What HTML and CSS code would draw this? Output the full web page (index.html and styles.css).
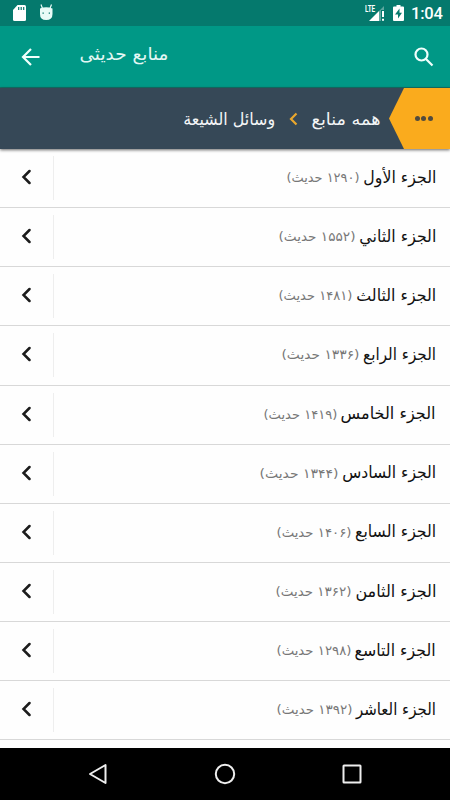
FILE: index.html
```html
<!DOCTYPE html>
<html lang="fa" dir="rtl">
<head>
<meta charset="utf-8">
<title>منابع حدیثی</title>
<link rel="stylesheet" href="styles.css">
</head>
<body>
<div class="status" dir="ltr">
  <svg class="status-left" width="60" height="26" viewBox="0 0 60 26">
    <path fill="#fff" d="M17.500 5H24.500Q26 5 26 6.500V19.500Q26 21 24.500 21H14.500Q13 21 13 19.500V10Z"/>
    <path stroke="#087a6e" stroke-width="1.200" d="M18.700 7v3M21.200 7v3M23.700 7v3"/>
    <path fill="#e9fbf7" d="M40 8.500Q46 6 52.500 8.500V14Q52.500 20 46.200 20T40 14Z"/>
    <path stroke="#e9fbf7" stroke-width="1.200" d="M41 4.500l1.500 4M51.500 4.500l-1.500 4"/>
    <path fill="#087a6e" d="M42.500 12.500h1.300v1.300h-1.300zM48.700 12.500H50v1.300h-1.300z"/>
  </svg>
  <div class="status-right">
    <span class="lte">LTE</span>
    <svg width="18" height="26" viewBox="0 0 18 26">
      <path fill="#fff" d="M1 21L11 11V21Z"/>
      <path fill="#5da79f" d="M11 11L16 6V10H13V21H11Z"/>
      <path fill="#fff" d="M14 11h2v6h-2zM14 18.700h2v2h-2z"/>
    </svg>
    <svg class="battery" width="12" height="26" viewBox="0 0 12 26">
      <path fill="#fff" d="M3.500 5H7.500V6.500H10Q11 6.500 11 7.500V20Q11 21 10 21H1Q0 21 0 20V7.500Q0 6.500 1 6.500H3.500Z"/>
      <path fill="#087a6e" d="M6.500 8.500L2 14.500H5V18.500L9 12.700H6.500Z"/>
    </svg>
    <span class="clock">1:04</span>
  </div>
</div>
<header class="toolbar" dir="ltr">
  <svg class="back" width="20" height="20" viewBox="0 0 20 20"><path d="M18.500 10H2.500M10 2L2 10L10 18"/></svg>
  <h1 dir="rtl"><span class="fit" data-width="89">منابع حدیثی</span></h1>
  <svg class="search" width="20" height="20" viewBox="0 0 20 20"><circle cx="7.500" cy="7.500" r="6"/><path d="M12 12L18.500 18.500"/></svg>
</header>
<nav class="crumbs">
  <div class="more"><i></i><i></i><i></i></div>
  <span class="crumb all"><span class="fit" data-width="69">همه منابع</span></span>
  <svg class="sep" width="9" height="14" viewBox="0 0 9 14"><path d="M7.500 1.500L2 7L7.500 12.500"/></svg>
  <span class="crumb book"><span class="fit" data-width="92">وسائل الشیعة</span></span>
</nav>
<main class="list" id="list"></main>
<footer class="navbar" dir="ltr">
  <svg width="20" height="22" viewBox="0 0 20 22"><path d="M17.500 2V20L2 11Z"/></svg>
  <svg width="22" height="22" viewBox="0 0 22 22"><circle cx="11" cy="11" r="9.200"/></svg>
  <svg width="20" height="22" viewBox="0 0 20 22"><rect x="1.500" y="2.500" width="17" height="17" rx=".5"/></svg>
</footer>
<script src="app.js"></script>
</body>
</html>
```
FILE: styles.css
```css
* { box-sizing: border-box; }
body { margin: 0; width: 450px; height: 800px; overflow: hidden; display: flex; flex-direction: column; background: #fefefe; font-family: "DejaVu Sans", sans-serif; color: #111; }
svg { display: block; flex: none; }
.fit { display: inline-block; transform-origin: right center; white-space: nowrap; }
.status { flex: none; height: 26px; background: #05796d; display: flex; justify-content: space-between; }
.status-right { display: flex; padding-right: 9px; color: #fff; font-family: Roboto, sans-serif; }
.lte { font-size: 9px; line-height: 18px; font-weight: 700; width: 3px; white-space: nowrap; transform: scaleX(.7); transform-origin: left; }
.battery { margin-left: 7px; }
.clock { margin-left: 6px; font-size: 16.500px; font-weight: 500; line-height: 28px; width: 30px; letter-spacing: -.2px; }
.toolbar { flex: none; height: 62px; background: #009886; display: flex; align-items: center; padding: 0 16px 0 21px; border-bottom: 1px solid #147268; }
.toolbar svg { fill: none; stroke: #f0fffc; stroke-width: 2.200; }
.toolbar h1 { margin: 0 auto 0 38px; font-size: 17.500px; font-weight: 400; color: #e4f7f4; line-height: 24px; padding-bottom: 6px; white-space: nowrap; }
.crumbs { flex: none; height: 61px; background: #364857; display: flex; align-items: center; box-shadow: 0 1px 3px rgba(0,0,0,.6); position: relative; color: #f3f5f6; }
.more { width: 61px; height: 61px; background: #faab1d; clip-path: polygon(15px 0, 100% 0, 100% 100%, 15px 100%, 0 50%); display: flex; align-items: center; justify-content: center; gap: 1.500px; padding-left: 8px; }
.more i { width: 5px; height: 5px; border-radius: 50%; background: #514b3e; }
.crumb { font-size: 17px; line-height: 24px; white-space: nowrap; }
.all { margin-right: 8px; }
.sep { margin: 0 14px; fill: none; stroke: #e9a72d; stroke-width: 2.200; }
.list { flex: 1; min-height: 0; overflow: hidden; }
.row { height: 59.150px; display: flex; align-items: center; border-bottom: 1px solid #d8d8d8; padding-right: 14px; }
.title { font-size: 16.500px; white-space: nowrap; padding-bottom: 2px; }
.count { font-size: 13px; color: #777; white-space: nowrap; padding-bottom: 1px; margin-right: 4px; }
.go { margin-right: auto; width: 54px; height: 44px; border-right: 1px solid #eee; padding: 13px 0 0 21px; display: flex; justify-content: flex-end; }
.go svg { fill: none; stroke: #1c1c1c; stroke-width: 2.500; stroke-linecap: round; }
.navbar { flex: none; height: 52px; background: #000; display: flex; align-items: center; justify-content: space-between; padding: 0 88px; }
.navbar svg { fill: none; stroke: #eee; stroke-width: 2; stroke-linejoin: round; }
```
FILE: app.js
```javascript
// name, number of hadiths, title width, count width
const rows = [
  ['الأول', '۱۲۹۰', 73, 73], ['الثاني', '۱۵۵۲', 77, 77], ['الثالث', '۱۴۸۱', 80, 74],
  ['الرابع', '۱۳۳۶', 73, 78], ['الخامس', '۱۴۱۹', 95, 74], ['السادس', '۱۳۴۴', 94, 79],
  ['السابع', '۱۴۰۶', 81, 75], ['الثامن', '۱۳۶۲', 81, 76], ['التاسع', '۱۲۹۸', 81, 75],
  ['العاشر', '۱۳۹۲', 80, 76]
];
document.getElementById('list').innerHTML = rows.map(([name, n, tw, cw]) => `
  <div class="row"><span class="title"><span class="fit" data-width="${tw}">الجزء ${name}</span></span><span class="count"><span class="fit" data-width="${cw}">(${n} حدیث)</span></span>
  <span class="go"><svg width="10" height="16" viewBox="0 0 10 16"><path d="M8.500 2L2.500 8L8.500 14"/></svg></span></div>`).join('');

const labels = [...document.querySelectorAll('.fit')].map(el => [el, el.getBoundingClientRect().width]);
for (const [el, natural] of labels) {
  const width = Number(el.dataset.width);
  el.style.transform = `scaleX(${width / natural})`;
  el.style.marginLeft = `${width - natural}px`;
}
```
